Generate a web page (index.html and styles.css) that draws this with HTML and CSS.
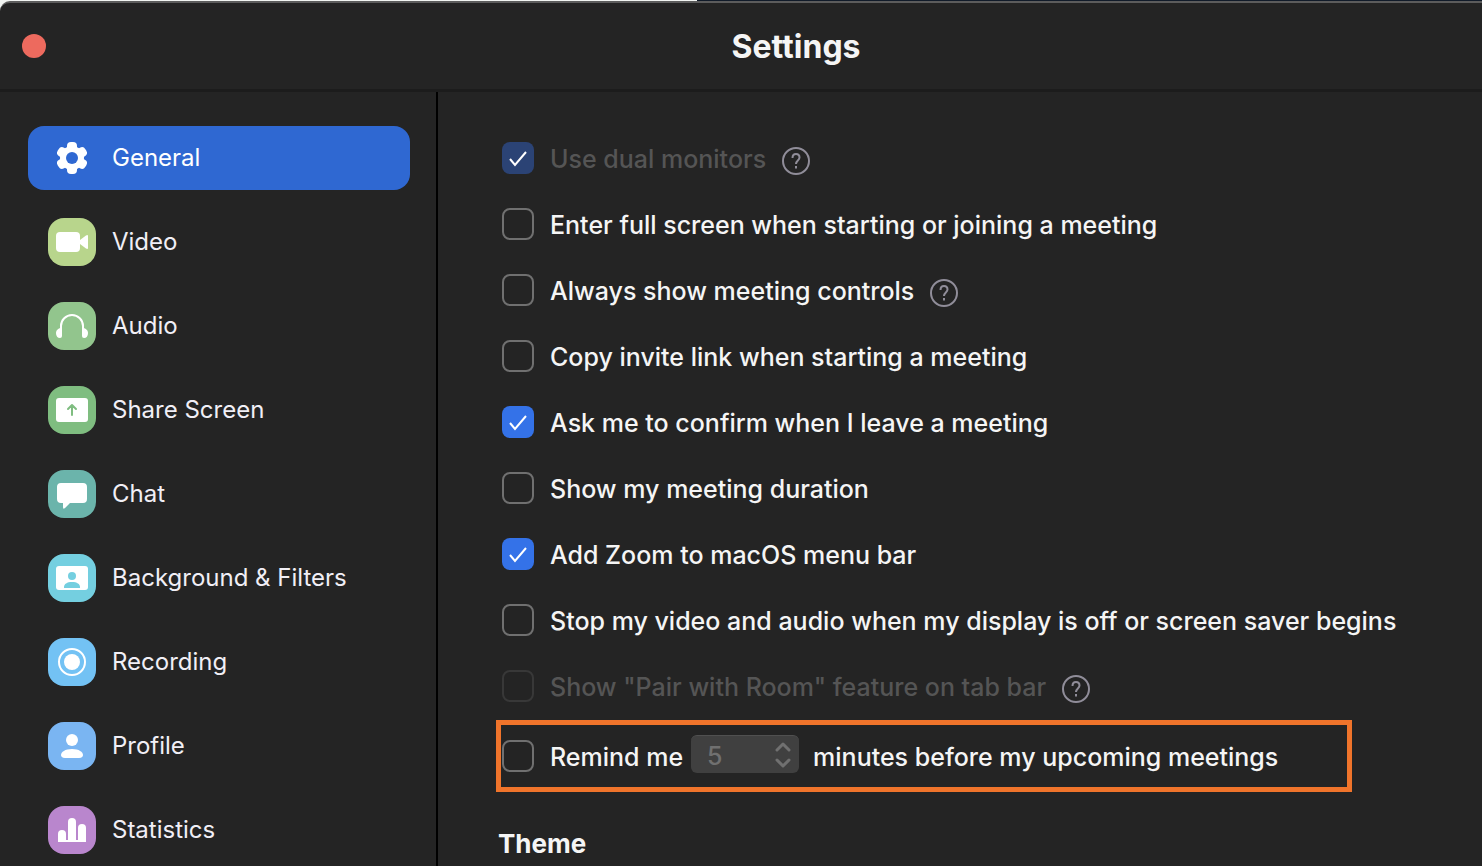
FILE: index.html
```
<!DOCTYPE html>
<html lang="en">
<head>
    <meta charset="UTF-8">
    <meta name="viewport" content="width=device-width, initial-scale=1.0">
    <title>Settings</title>
    <link rel="stylesheet" href="styles.css">
</head>
<body>
    <div class="window">
        <header class="titlebar">
            <button class="close" type="button" aria-label="Close"></button>
            <h1 class="title">Settings</h1>
        </header>

        <div class="panes">
            <nav class="sidebar">
                <a class="nav-item active" href="#general">
                    <svg class="nav-icon" viewBox="0 0 48 48">
                        <mask id="hole">
                            <rect width="48" height="48" fill="#fff"/>
                            <circle cx="24" cy="24" r="6" fill="#000"/>
                        </mask>
                        <g fill="#fff" mask="url(#hole)">
                            <circle cx="24" cy="24" r="12"/>
                            <rect x="19" y="8" width="10" height="32" rx="4"/>
                            <rect x="19" y="8" width="10" height="32" rx="4" transform="rotate(60 24 24)"/>
                            <rect x="19" y="8" width="10" height="32" rx="4" transform="rotate(120 24 24)"/>
                        </g>
                    </svg>
                    <span class="nav-label">General</span>
                </a>
                <a class="nav-item" href="#video">
                    <svg class="nav-icon video" viewBox="0 0 48 48" fill="#fff">
                        <rect x="8" y="14" width="24" height="20" rx="4"/>
                        <path d="M32 22l6-4.500q2-1 2 .5v12q0 1.500-2 .5l-6-4.500z"/>
                    </svg>
                    <span class="nav-label">Video</span>
                </a>
                <a class="nav-item" href="#audio">
                    <svg class="nav-icon audio" viewBox="0 0 48 48" fill="#fff">
                        <path d="M13 29v-5a11 11 0 0 1 22 0v5" fill="none" stroke="#fff" stroke-width="2"/>
                        <path d="M14 26v8q0 2-2 2c-2.500 0-4-2-4-5s2.500-5 6-5z"/>
                        <path d="M34 26v8q0 2 2 2c2.500 0 4-2 4-5s-2.500-5-6-5z"/>
                    </svg>
                    <span class="nav-label">Audio</span>
                </a>
                <a class="nav-item" href="#share">
                    <svg class="nav-icon share" viewBox="0 0 48 48" fill="#fff">
                        <rect x="8" y="12" width="32" height="24" rx="3"/>
                        <path d="M24 29V19M20 23l4-4 4 4" fill="none" stroke="#7fbd80" stroke-width="2" stroke-linecap="round" stroke-linejoin="round"/>
                    </svg>
                    <span class="nav-label">Share Screen</span>
                </a>
                <a class="nav-item" href="#chat">
                    <svg class="nav-icon chat" viewBox="0 0 48 48" fill="#fff">
                        <path d="M13 13h22q4 0 4 4v12q0 4-4 4H22l-5 5q-2 2-2-1v-4h-2q-4 0-4-4V17q0-4 4-4z"/>
                    </svg>
                    <span class="nav-label">Chat</span>
                </a>
                <a class="nav-item" href="#background">
                    <svg class="nav-icon background" viewBox="0 0 48 48" fill="#fff">
                        <rect x="8" y="12" width="32" height="24" rx="3"/>
                        <circle cx="24" cy="22" r="4" fill="#74cfe0"/>
                        <path d="M16 34v-1c0-3 3-5 8-5s8 2 8 5v1z" fill="#74cfe0"/>
                    </svg>
                    <span class="nav-label">Background &amp; Filters</span>
                </a>
                <a class="nav-item" href="#recording">
                    <svg class="nav-icon recording" viewBox="0 0 48 48" fill="#fff">
                        <circle cx="24" cy="24" r="13" fill="none" stroke="#fff" stroke-width="2"/>
                        <circle cx="24" cy="24" r="8"/>
                    </svg>
                    <span class="nav-label">Recording</span>
                </a>
                <a class="nav-item" href="#profile">
                    <svg class="nav-icon profile" viewBox="0 0 48 48" fill="#fff">
                        <circle cx="24" cy="18" r="6"/>
                        <path d="M17 36c-3 0-4-1.500-4-3 0-3 4-6 11-6s11 3 11 6c0 1.500-1 3-4 3z"/>
                    </svg>
                    <span class="nav-label">Profile</span>
                </a>
                <a class="nav-item" href="#statistics">
                    <svg class="nav-icon statistics" viewBox="0 0 48 48" fill="#fff">
                        <path d="M10 36V28a4 4 0 0 1 8 0v8z"/>
                        <path d="M20 36V16a4 4 0 0 1 8 0v20z"/>
                        <path d="M30 36V22a4 4 0 0 1 8 0v14z"/>
                        <rect x="10" y="34" width="28" height="2"/>
                    </svg>
                    <span class="nav-label">Statistics</span>
                </a>
            </nav>

            <main class="content">
                <div class="option disabled">
                    <input type="checkbox" id="dual" checked disabled>
                    <label for="dual">Use dual monitors</label>
                    <button class="help" type="button" aria-label="Help">
                        <svg viewBox="0 0 28 28" fill="none" stroke="#908d99" stroke-width="2">
                            <circle cx="14" cy="14" r="13"/>
                            <path d="M10.500 11c0-2.500 1.500-4 3.500-4s3.500 1.300 3.500 3.500c0 3-3.500 3-3.500 6.500M14 19v2.500"/>
                        </svg>
                    </button>
                </div>
                <div class="option">
                    <input type="checkbox" id="fullscreen">
                    <label for="fullscreen">Enter full screen when starting or joining a meeting</label>
                </div>
                <div class="option">
                    <input type="checkbox" id="controls">
                    <label for="controls">Always show meeting controls</label>
                    <button class="help" type="button" aria-label="Help">
                        <svg viewBox="0 0 28 28" fill="none" stroke="#908d99" stroke-width="2">
                            <circle cx="14" cy="14" r="13"/>
                            <path d="M10.500 11c0-2.500 1.500-4 3.500-4s3.500 1.300 3.500 3.500c0 3-3.500 3-3.500 6.500M14 19v2.500"/>
                        </svg>
                    </button>
                </div>
                <div class="option">
                    <input type="checkbox" id="invite">
                    <label for="invite">Copy invite link when starting a meeting</label>
                </div>
                <div class="option">
                    <input type="checkbox" id="confirm" checked>
                    <label for="confirm">Ask me to confirm when I leave a meeting</label>
                </div>
                <div class="option">
                    <input type="checkbox" id="duration">
                    <label for="duration">Show my meeting duration</label>
                </div>
                <div class="option">
                    <input type="checkbox" id="menubar" checked>
                    <label for="menubar">Add Zoom to macOS menu bar</label>
                </div>
                <div class="option">
                    <input type="checkbox" id="saver">
                    <label for="saver">Stop my video and audio when my display is off or screen saver begins</label>
                </div>
                <div class="option disabled">
                    <input type="checkbox" id="pair" disabled>
                    <label for="pair">Show "Pair with Room" feature on tab bar</label>
                    <button class="help" type="button" aria-label="Help">
                        <svg viewBox="0 0 28 28" fill="none" stroke="#908d99" stroke-width="2">
                            <circle cx="14" cy="14" r="13"/>
                            <path d="M10.500 11c0-2.500 1.500-4 3.500-4s3.500 1.300 3.500 3.500c0 3-3.500 3-3.500 6.500M14 19v2.500"/>
                        </svg>
                    </button>
                </div>
                <div class="option highlight">
                    <input type="checkbox" id="remind">
                    <label for="remind">Remind me</label>
                    <div class="stepper">
                        <input type="number" id="minutes" value="5" disabled>
                        <svg class="arrows" viewBox="0 0 16 26" fill="none" stroke="#707070" stroke-width="3" stroke-linecap="round" stroke-linejoin="round">
                            <path d="M2 8l6-6 6 6M2 18l6 6 6-6"/>
                        </svg>
                    </div>
                    <label for="minutes">minutes before my upcoming meetings</label>
                </div>

                <h2 class="section">Theme</h2>
            </main>
        </div>
    </div>
</body>
</html>
```
FILE: styles.css
```
* {
    box-sizing: border-box;
}

body {
    margin: 0;
    height: 100vh;
    padding-top: 1px;
    overflow: hidden;
    font-family: Inter, "Liberation Sans", sans-serif;
    background: linear-gradient(to right, #f1f4f1 47%, #111b29 47%);
}

.window {
    height: 100%;
    display: flex;
    flex-direction: column;
    overflow: hidden;
    background-color: #242424;
    color: #f5f5f5;
    border-top: 2px solid #5c5c5c;
    border-top-left-radius: 10px;
}

.titlebar {
    display: flex;
    align-items: center;
    flex-shrink: 0;
    height: 89px;
    padding-left: 22px;
    border-bottom: 3px solid #1c1c1c;
}

.close {
    width: 24px;
    height: 24px;
    padding: 0;
    border: none;
    border-radius: 50%;
    background-color: #ed6a5e;
}

.title {
    flex: 1;
    margin: 0;
    padding: 2px 0 0 64px;
    font-size: 32px;
    font-weight: 700;
    line-height: 40px;
    text-align: center;
}

.panes {
    flex: 1;
    display: flex;
    min-height: 0;
}

.sidebar {
    display: flex;
    flex-direction: column;
    flex-shrink: 0;
    gap: 20px;
    width: 438px;
    padding: 34px 26px 0 28px;
    border-right: 2px solid #000;
}

.nav-item {
    display: flex;
    align-items: center;
    flex-shrink: 0;
    gap: 16px;
    height: 64px;
    padding-left: 20px;
    border-radius: 16px;
    font-size: 24px;
    color: #f1eff6;
    text-decoration: none;
}

.nav-item.active {
    background-color: #2f68d2;
    color: #fff;
}

.nav-label {
    padding-bottom: 2px;
}

.nav-icon {
    width: 48px;
    height: 48px;
    border-radius: 16px;
}

.video { background-color: #b8d58c; }
.audio { background-color: #92c58d; }
.share { background-color: #7fbd80; }
.chat { background-color: #6bb4ab; }
.background { background-color: #74cfe0; }
.recording { background-color: #73c2f4; }
.profile { background-color: #7ab5f2; }
.statistics { background-color: #b986cd; }

.content {
    flex: 1;
    min-width: 0;
    padding: 50px 64px 0;
    font-size: 25px;
    font-weight: 500;
    line-height: 32px;
    white-space: nowrap;
}

.option {
    display: flex;
    align-items: center;
    gap: 16px;
    height: 32px;
    margin-bottom: 34px;
}

.option label {
    padding-top: 2px;
}

.option.disabled {
    color: #555;
}

input[type="checkbox"] {
    appearance: none;
    flex-shrink: 0;
    width: 32px;
    height: 32px;
    margin: 0;
    border: 2px solid #707070;
    border-radius: 8px;
}

input[type="checkbox"]:disabled {
    border-color: #383838;
}

input[type="checkbox"]:checked {
    border: none;
    background: #3472e8 url("data:image/svg+xml,%3Csvg xmlns='http://www.w3.org/2000/svg' viewBox='0 0 32 32'%3E%3Cpath d='M8 17l5 6L24 10' fill='none' stroke='white' stroke-width='2'/%3E%3C/svg%3E");
}

input[type="checkbox"]:checked:disabled {
    background-color: #2b4375;
}

.help {
    width: 28px;
    height: 28px;
    margin-top: 5px;
    padding: 0;
    border: none;
    background: none;
}

.help svg {
    display: block;
}

.highlight {
    max-width: 856px;
    height: auto;
    margin: -16px 0 34px -6px;
    padding: 10px 0 10px 1px;
    border: 5px solid #f0742b;
}

.stepper {
    display: flex;
    align-items: center;
    width: 108px;
    height: 38px;
    margin: 0 -2px 4px -8px;
    padding: 0 8px 0 16px;
    border-radius: 6px;
    background-color: #404040;
    border-top: 1px solid #505050;
}

.stepper input {
    appearance: textfield;
    flex: 1;
    width: 0;
    padding: 2px 0 0;
    border: none;
    background: none;
    color: #707070;
    font: inherit;
}

.arrows {
    width: 16px;
    height: 26px;
}

.section {
    margin: 0 0 0 -4px;
    padding-top: 2px;
    font-size: 26px;
    font-weight: 700;
}
```
